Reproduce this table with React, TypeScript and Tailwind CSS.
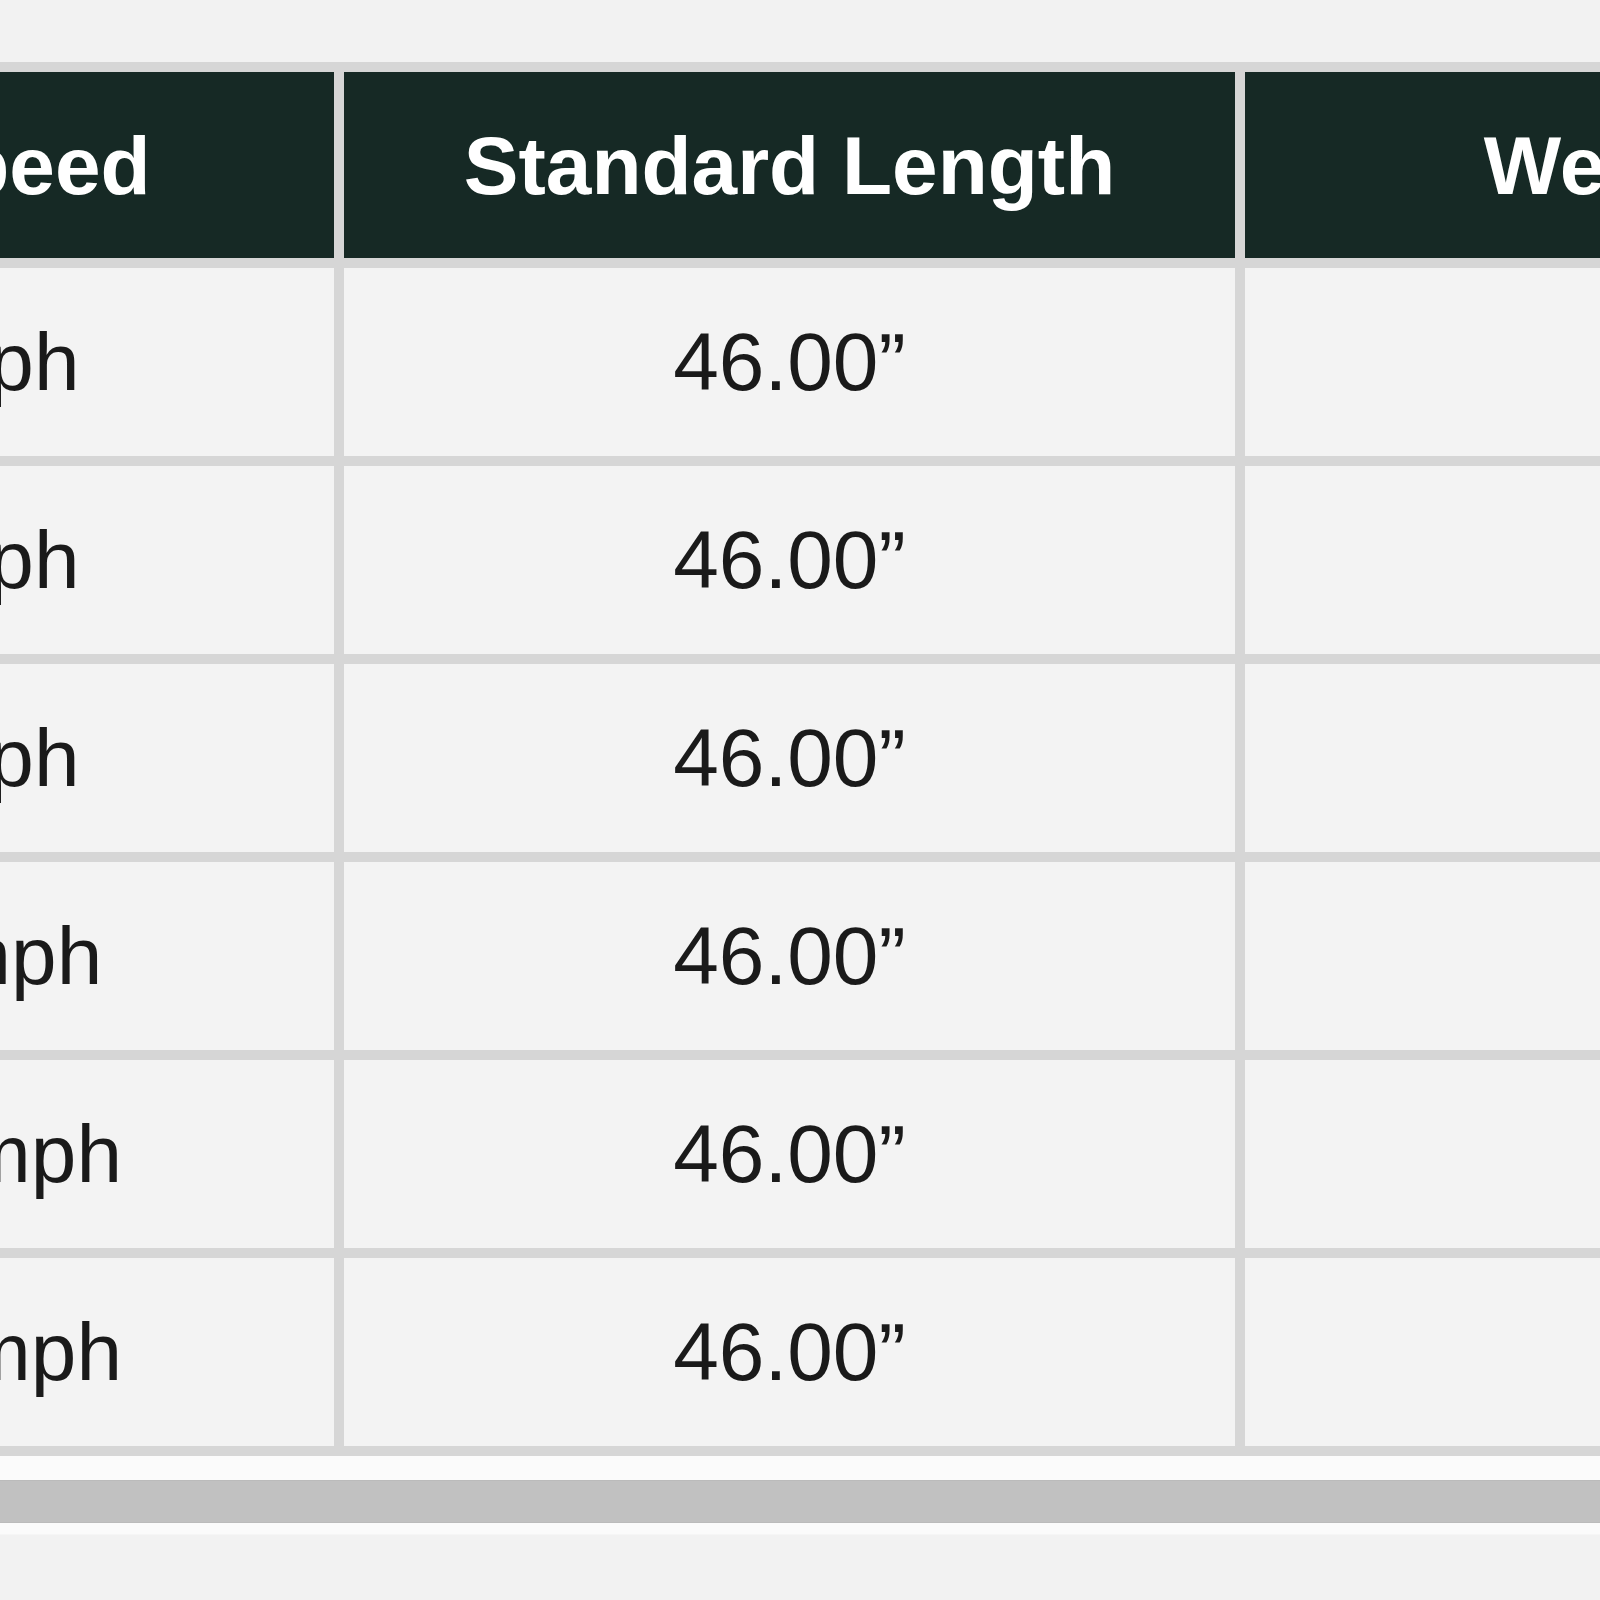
import React from "react";

const headers: { text: string; cls: string }[] = [
  { text: "Swing Speed", cls: "pl-[14px]" },
  { text: "Standard Length", cls: "" },
  { text: "Weight (g)", cls: "pr-[14px]" },
];
const rows: string[][] = [
  ["60-70 mph", "46.00”", "50g"],
  ["70-80 mph", "46.00”", "55g"],
  ["80-90 mph", "46.00”", "60g"],
  ["90-100 mph", "46.00”", "65g"],
  ["100-110 mph", "46.00”", "70g"],
  ["110-120 mph", "46.00”", "75g"],
];

export default function App() {
  return (
    <div
      className="w-[1600px] h-[1600px] overflow-hidden bg-[#f2f2f2] pt-[62px]"
      style={{ fontFamily: '"Liberation Sans", Arial, Helvetica, sans-serif' }}
    >
      <div className="ml-[-557px] w-[2693px] grid grid-cols-[891px_891px_891px] gap-[10px] bg-[#d6d6d6] py-[10px]">
        {headers.map((h) => (
          <div
            key={h.text}
            className={`h-[186px] bg-[#162925] flex items-center justify-center text-white font-bold text-[82px] leading-none whitespace-nowrap pt-[2px] ${h.cls}`}
          >
            {h.text}
          </div>
        ))}
        {rows.map((r, i) =>
          r.map((c, j) => (
            <div
              key={`${i}-${j}`}
              className={
                j === 0
                  ? "h-[188px] bg-[#f3f3f3] flex items-center justify-center text-[#1a1a1a] text-[82px] leading-none whitespace-nowrap pr-[10px]"
                  : "h-[188px] bg-[#f3f3f3] flex items-center justify-center text-[#1a1a1a] text-[82px] leading-none whitespace-nowrap"
              }
            >
              {c}
            </div>
          ))
        )}
      </div>
      <div className="h-[79px] bg-[#fbfbfb] pt-[24px] border-b border-[#f6f6f6]">
        <div className="h-[43px] bg-[#c1c1c1] border-y border-[#bbbbbb]" />
      </div>
    </div>
  );
}
